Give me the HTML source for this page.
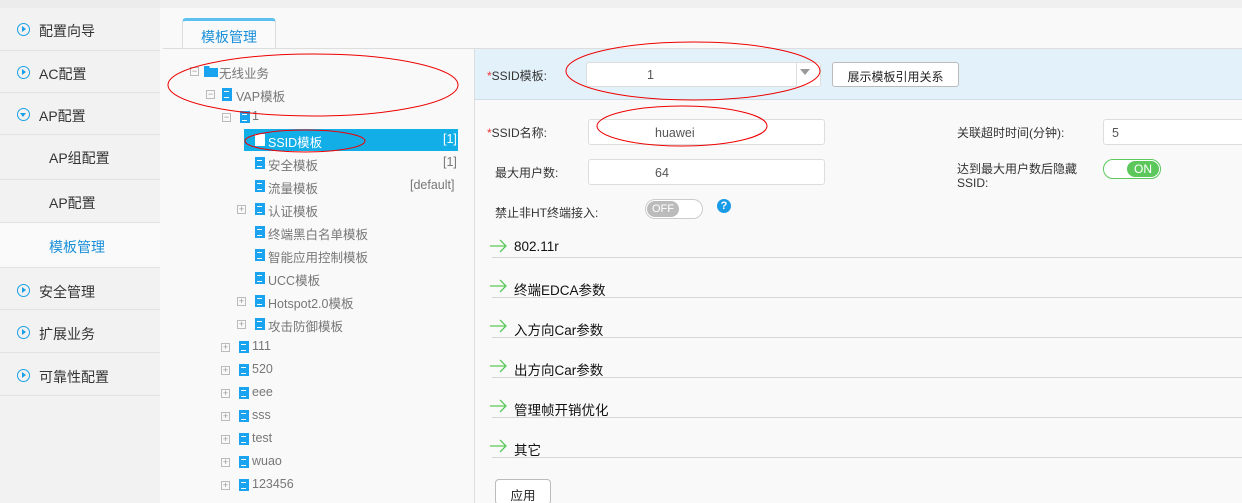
<!DOCTYPE html>
<html><head><meta charset="utf-8"><style>
*{margin:0;padding:0;box-sizing:border-box}
html,body{width:1242px;height:503px;overflow:hidden}
body{background:#f9f9f9;font-family:"Liberation Sans","Noto Sans CJK SC",sans-serif;position:relative;color:#333}
.a{position:absolute;white-space:nowrap}
.side{position:absolute;left:0;top:0;width:160px;height:503px;background:#f2f2f2;border-top:8px solid #ececec}
.si{position:absolute;left:0;width:160px;border-bottom:1px solid #e2e2e2;font-size:14px;color:#333}
.ic{position:absolute;left:17px;width:13px;height:13px;border:1.5px solid #1aa0e8;border-radius:50%}
.ic:after{content:"";position:absolute;left:3.5px;top:2px;border-left:4px solid #1aa0e8;border-top:3px solid transparent;border-bottom:3px solid transparent}
.ic.d:after{left:1.5px;top:3.5px;border-top:4px solid #1aa0e8;border-left:3px solid transparent;border-right:3px solid transparent;border-bottom:0}
.doc{position:absolute;width:10px;height:12px;background:#1aa3ef}
.doc:after{content:"";position:absolute;left:2px;top:3px;width:5px;height:5px;border-top:1px solid #fff;border-bottom:1px solid #fff}
.tr{position:absolute;font-size:12.5px;color:#777}
.pm{position:absolute;width:9px;height:9px;border:1px solid #bbb;font-size:9px;line-height:7px;text-align:center;color:#999}
.inp{position:absolute;height:26px;background:#fff;border:1px solid #ddd;border-radius:3px;font-size:12.5px;color:#555;padding:6px 8px}
.lb{position:absolute;font-size:12px;color:#333}
.sec{position:absolute;left:492px;width:750px;height:30px;border-bottom:1px solid #d6d6d6;font-size:13.5px;color:#111}
.sec span{position:absolute;left:22px;top:11px}
.sec svg{position:absolute;left:-2px;top:11px}
</style></head><body>
<div class="a" style="left:160px;top:0;width:1082px;height:8px;background:#f0f0f0"></div>
<div class="side">
<div class="si" style="top:0;height:43px"><div class="ic" style="top:15px"></div><span class="a" style="left:39px;top:13px">配置向导</span></div>
<div class="si" style="top:43px;height:42px"><div class="ic" style="top:15px"></div><span class="a" style="left:39px;top:13px">AC配置</span></div>
<div class="si" style="top:85px;height:42px"><div class="ic d" style="top:15px"></div><span class="a" style="left:39px;top:13px">AP配置</span></div>
<div class="si" style="top:127px;height:45px"><span class="a" style="left:49px;top:13px">AP组配置</span></div>
<div class="si" style="top:172px;height:43px"><span class="a" style="left:49px;top:13px">AP配置</span></div>
<div class="si" style="top:215px;height:45px;background:#fafafa"><span class="a" style="left:49px;top:14px;color:#1a8fd8">模板管理</span></div>
<div class="si" style="top:260px;height:42px"><div class="ic" style="top:16px"></div><span class="a" style="left:39px;top:14px">安全管理</span></div>
<div class="si" style="top:302px;height:43px"><div class="ic" style="top:16px"></div><span class="a" style="left:39px;top:14px">扩展业务</span></div>
<div class="si" style="top:345px;height:43px"><div class="ic" style="top:16px"></div><span class="a" style="left:39px;top:14px">可靠性配置</span></div>
</div>
<div class="a" style="left:182px;top:18px;width:94px;height:31px;background:#fafafa;border:1px solid #ddd;border-top:3px solid #5cc0f0;border-bottom:none;border-radius:4px 4px 0 0;font-size:14px;color:#1a8fd8;text-align:center;padding-top:6px">模板管理</div>
<div class="a" style="left:163px;top:48px;width:1079px;height:1px;background:#ddd"></div>
<div class="a" style="left:474px;top:49px;width:1px;height:454px;background:#ddd"></div>
<!-- tree -->
<div class="pm" style="left:190px;top:67px">−</div><svg class="a" style="left:204px;top:65px" width="14" height="12"><path d="M0 1h5l1 2h8v9H0z" fill="#1aa3ef"/></svg><span class="tr" style="left:219px;top:63px">无线业务</span>
<div class="pm" style="left:206px;top:90px">−</div><div class="doc" style="left:222px;top:88px;height:13px"></div><span class="tr" style="left:236px;top:86px">VAP模板</span>
<div class="pm" style="left:222px;top:113px">−</div><div class="doc" style="left:240px;top:111px"></div><span class="tr" style="left:252px;top:109px">1</span>
<div class="a" style="left:244px;top:129px;width:214px;height:22px;background:#12aee8"></div>
<div class="doc" style="left:255px;top:134px;background:#fff"></div><span class="tr" style="left:268px;top:132px;color:#fff">SSID模板</span><span class="tr" style="left:443px;top:132px;color:#fff">[1]</span>
<div class="doc" style="left:255px;top:157px"></div><span class="tr" style="left:268px;top:155px">安全模板</span><span class="tr" style="left:443px;top:155px">[1]</span>
<div class="doc" style="left:255px;top:180px"></div><span class="tr" style="left:268px;top:178px">流量模板</span><span class="tr" style="left:410px;top:178px">[default]</span>
<div class="pm" style="left:237px;top:205px">+</div><div class="doc" style="left:255px;top:203px"></div><span class="tr" style="left:268px;top:201px">认证模板</span>
<div class="doc" style="left:255px;top:226px"></div><span class="tr" style="left:268px;top:224px">终端黑白名单模板</span>
<div class="doc" style="left:255px;top:249px"></div><span class="tr" style="left:268px;top:247px">智能应用控制模板</span>
<div class="doc" style="left:255px;top:272px"></div><span class="tr" style="left:268px;top:270px">UCC模板</span>
<div class="pm" style="left:237px;top:297px">+</div><div class="doc" style="left:255px;top:295px"></div><span class="tr" style="left:268px;top:293px">Hotspot2.0模板</span>
<div class="pm" style="left:237px;top:320px">+</div><div class="doc" style="left:255px;top:318px"></div><span class="tr" style="left:268px;top:316px">攻击防御模板</span>
<div class="pm" style="left:221px;top:343px">+</div><div class="doc" style="left:239px;top:341px"></div><span class="tr" style="left:252px;top:339px">111</span>
<div class="pm" style="left:221px;top:366px">+</div><div class="doc" style="left:239px;top:364px"></div><span class="tr" style="left:252px;top:362px">520</span>
<div class="pm" style="left:221px;top:389px">+</div><div class="doc" style="left:239px;top:387px"></div><span class="tr" style="left:252px;top:385px">eee</span>
<div class="pm" style="left:221px;top:412px">+</div><div class="doc" style="left:239px;top:410px"></div><span class="tr" style="left:252px;top:408px">sss</span>
<div class="pm" style="left:221px;top:435px">+</div><div class="doc" style="left:239px;top:433px"></div><span class="tr" style="left:252px;top:431px">test</span>
<div class="pm" style="left:221px;top:458px">+</div><div class="doc" style="left:239px;top:456px"></div><span class="tr" style="left:252px;top:454px">wuao</span>
<div class="pm" style="left:221px;top:481px">+</div><div class="doc" style="left:239px;top:479px"></div><span class="tr" style="left:252px;top:477px">123456</span>
<!-- right -->
<div class="a" style="left:475px;top:49px;width:767px;height:51px;background:#e3f1fa;border-bottom:1px solid #d0dde6"></div>
<span class="lb" style="left:487px;top:67px"><span style="color:#e33">*</span>SSID模板:</span>
<div class="inp" style="left:586px;top:62px;width:235px;height:25px;padding:5px 60px">1</div>
<div class="a" style="left:796px;top:63px;width:1px;height:23px;background:#ddd"></div>
<svg class="a" style="left:800px;top:69px" width="10" height="6"><path d="M0 0h10L5 6z" fill="#999"/></svg>
<div class="a" style="left:832px;top:62px;width:127px;height:25px;background:#fff;border:1px solid #bbb;border-radius:3px;font-size:12px;color:#222;text-align:center;padding-top:5px">展示模板引用关系</div>
<span class="lb" style="left:487px;top:124px"><span style="color:#e33">*</span>SSID名称:</span>
<div class="inp" style="left:588px;top:119px;width:237px;padding-left:66px">huawei</div>
<span class="lb" style="left:495px;top:164px">最大用户数:</span>
<div class="inp" style="left:588px;top:159px;width:237px;padding-left:66px">64</div>
<span class="lb" style="left:495px;top:204px">禁止非HT终端接入:</span>
<div class="a" style="left:645px;top:199px;width:58px;height:20px;border:1px solid #ccc;border-radius:10px;background:#fff"><div style="position:absolute;left:1px;top:1px;width:32px;height:16px;border-radius:8px;background:#bbb;color:#fff;font-size:11px;text-align:center;line-height:16px">OFF</div></div>
<div class="a" style="left:717px;top:199px;width:14px;height:14px;border-radius:50%;background:#1a9be8;color:#fff;font-size:11px;font-weight:bold;text-align:center;line-height:14px">?</div>
<span class="lb" style="left:957px;top:124px">关联超时时间(分钟):</span>
<div class="inp" style="left:1103px;top:119px;width:150px;padding-left:8px">5</div>
<span class="lb" style="left:957px;top:162px;line-height:14px">达到最大用户数后隐藏<br>SSID:</span>
<div class="a" style="left:1103px;top:159px;width:58px;height:20px;border:1px solid #5cc85c;border-radius:10px;background:#fff"><div style="position:absolute;right:1px;top:1px;width:32px;height:16px;border-radius:8px;background:#5cc85c;color:#fff;font-size:12px;text-align:center;line-height:16px">ON</div></div>
<div class="sec" style="top:228px"><svg width="18" height="14"><path d="M0 7h16M10 1l6 6-6 6" stroke="#5ac85a" stroke-width="1.3" fill="none"/></svg><span>802.11r</span></div>
<div class="sec" style="top:268px"><svg width="18" height="14"><path d="M0 7h16M10 1l6 6-6 6" stroke="#5ac85a" stroke-width="1.3" fill="none"/></svg><span>终端EDCA参数</span></div>
<div class="sec" style="top:308px"><svg width="18" height="14"><path d="M0 7h16M10 1l6 6-6 6" stroke="#5ac85a" stroke-width="1.3" fill="none"/></svg><span>入方向Car参数</span></div>
<div class="sec" style="top:348px"><svg width="18" height="14"><path d="M0 7h16M10 1l6 6-6 6" stroke="#5ac85a" stroke-width="1.3" fill="none"/></svg><span>出方向Car参数</span></div>
<div class="sec" style="top:388px"><svg width="18" height="14"><path d="M0 7h16M10 1l6 6-6 6" stroke="#5ac85a" stroke-width="1.3" fill="none"/></svg><span>管理帧开销优化</span></div>
<div class="sec" style="top:428px"><svg width="18" height="14"><path d="M0 7h16M10 1l6 6-6 6" stroke="#5ac85a" stroke-width="1.3" fill="none"/></svg><span>其它</span></div>
<div class="a" style="left:495px;top:479px;width:56px;height:26px;background:#fff;border:1px solid #bbb;border-radius:4px;font-size:12.5px;color:#222;text-align:center;padding-top:5px">应用</div>
<svg class="a" style="left:0;top:0" width="1242" height="503"><g fill="none" stroke="#e00" stroke-width="1">
<ellipse cx="313" cy="85" rx="145" ry="31"/><ellipse cx="305" cy="141" rx="60" ry="11"/>
<ellipse cx="693" cy="71" rx="127" ry="29"/><ellipse cx="682" cy="126" rx="85" ry="20"/></g></svg>
</body></html>
